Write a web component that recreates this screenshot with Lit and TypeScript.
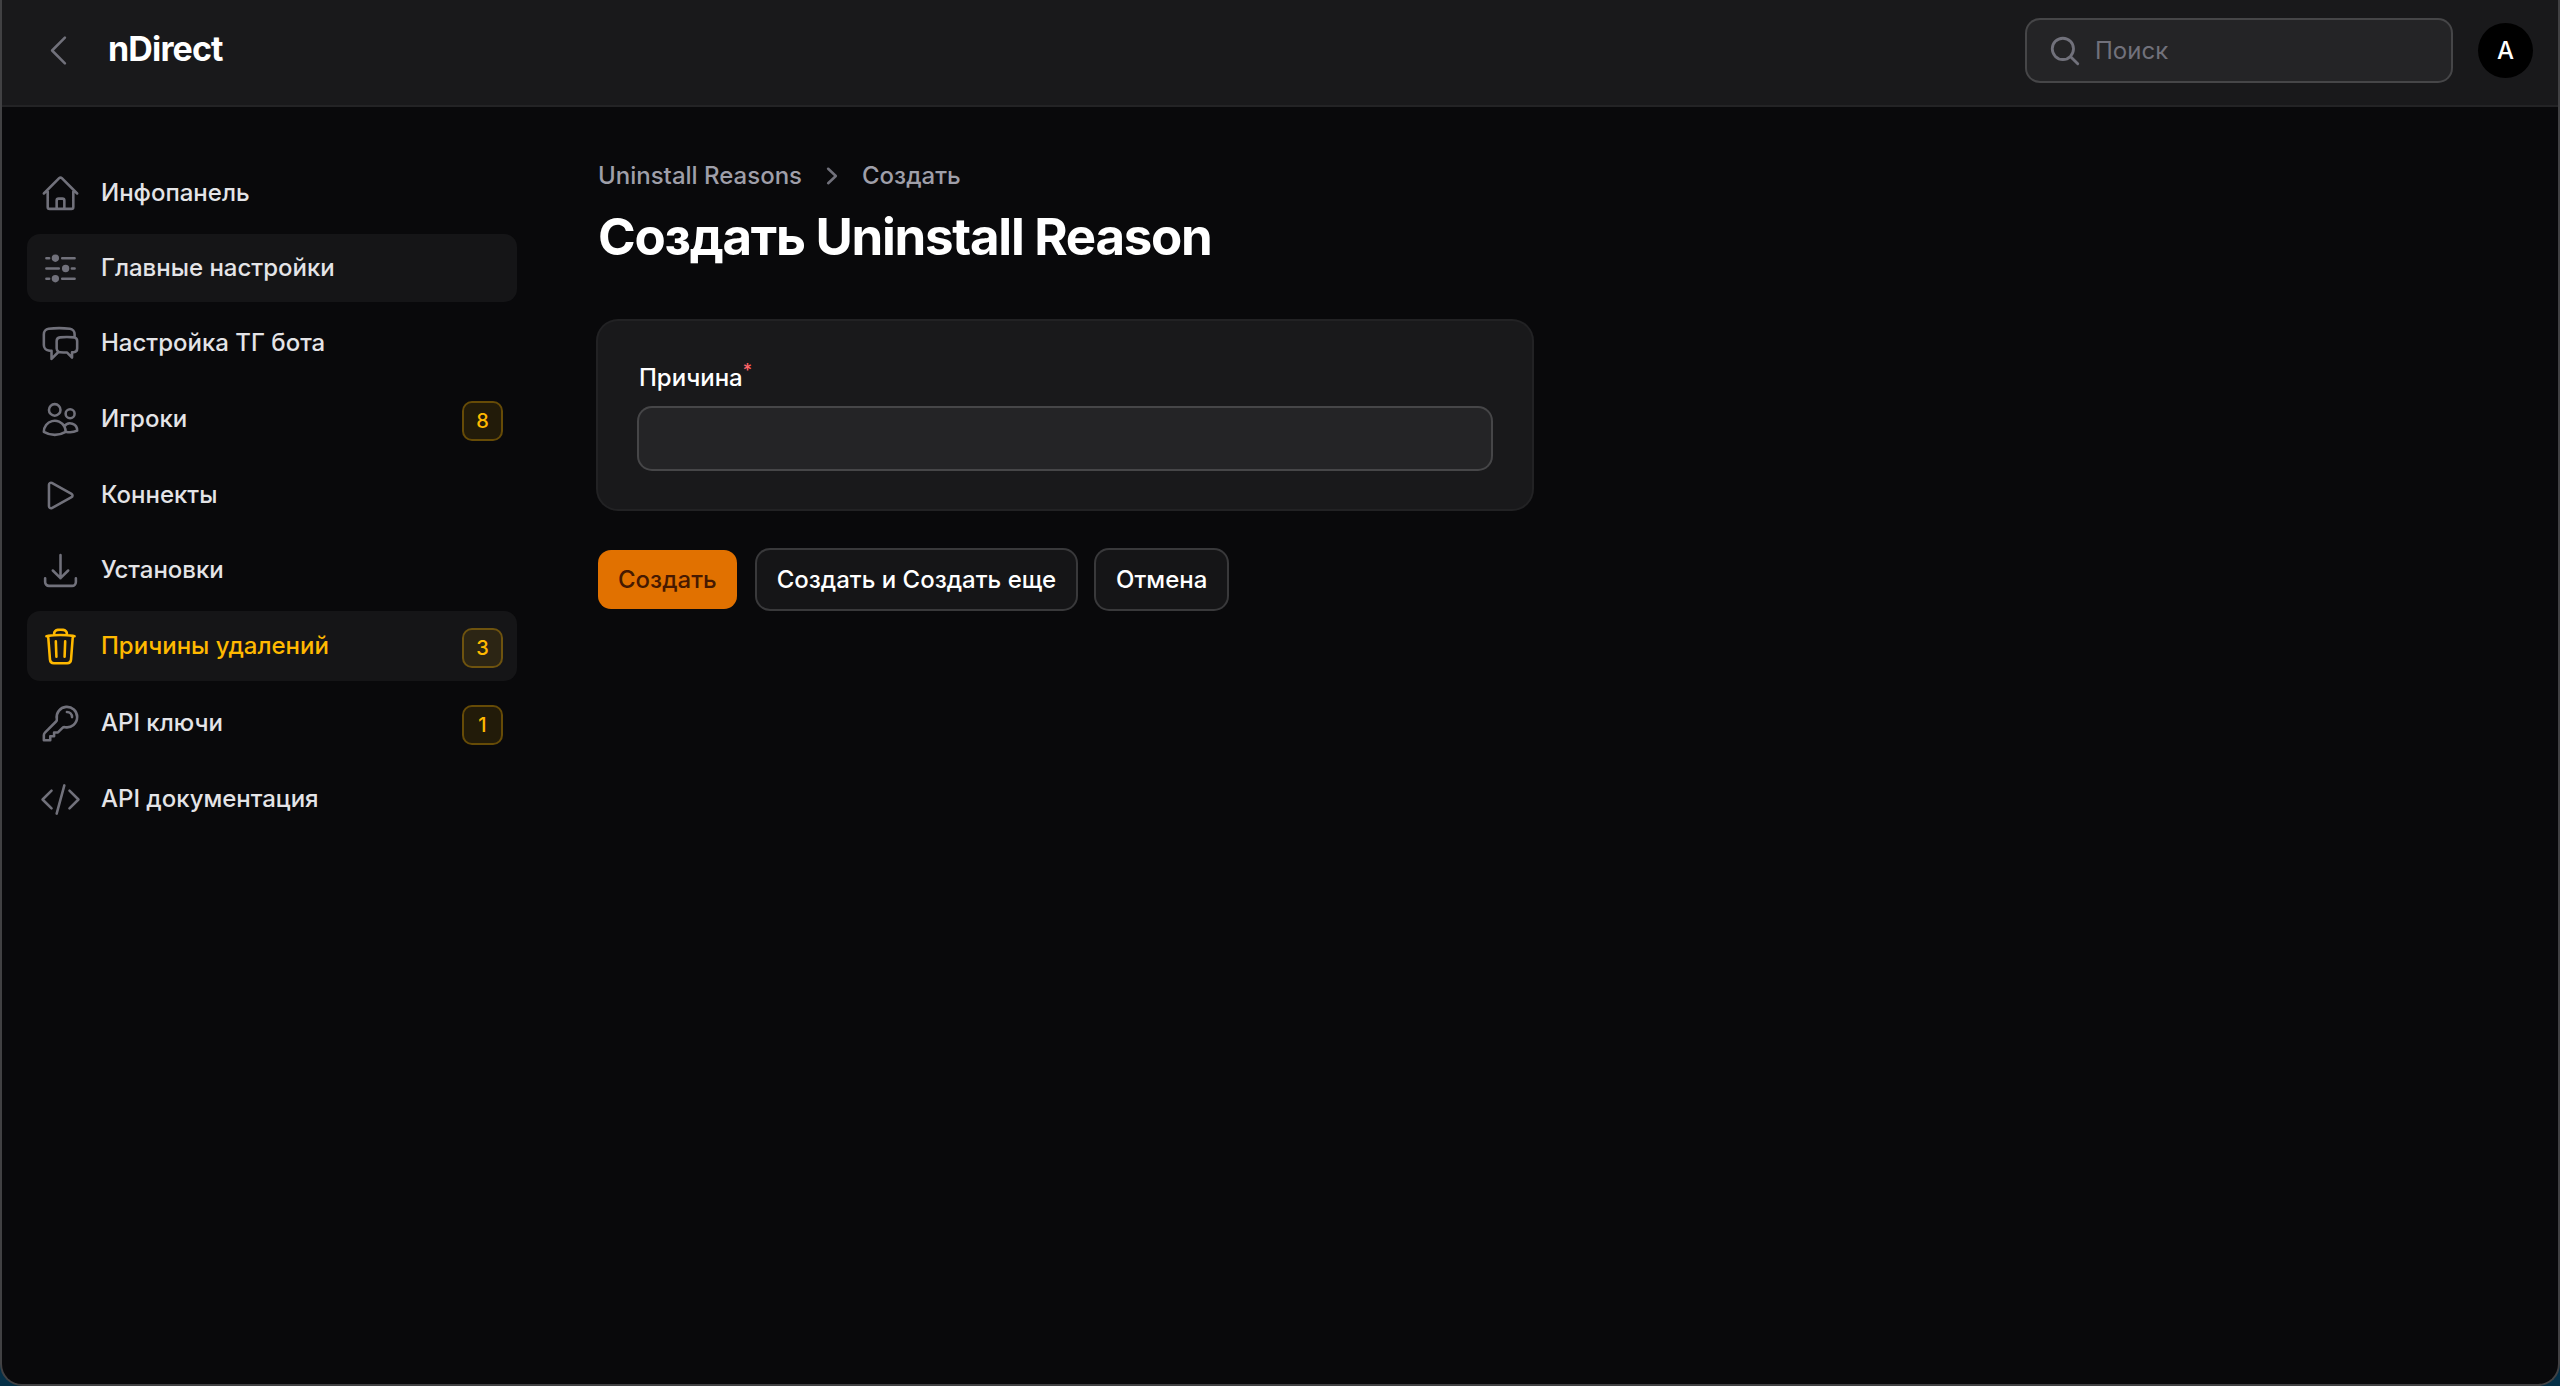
import { LitElement, html, css, svg } from "lit";
import { customElement } from "lit/decorators.js";
import { classMap } from "lit/directives/class-map.js";

interface NavItem {
  label: string;
  icon: string;
  badge?: string;
  state?: "hovered" | "active";
}

const ICONS: Record<string, string> = {
  home: "m2.25 12 8.954-8.955c.44-.439 1.152-.439 1.591 0L21.75 12M4.5 9.75v10.125c0 .621.504 1.125 1.125 1.125H9.75v-4.875c0-.621.504-1.125 1.125-1.125h2.25c.621 0 1.125.504 1.125 1.125V21h4.125c.621 0 1.125-.504 1.125-1.125V9.75M8.25 21h8.25",
  sliders:
    "M3.75 6h1.6M13 6h7.25M3.75 12H11M18.65 12h1.6M3.75 18h1.6M13 18h7.25M7.6 6a1.4 1.4 0 1 0 2.8 0a1.4 1.4 0 1 0-2.8 0M9 6h.01M13.6 12a1.4 1.4 0 1 0 2.8 0a1.4 1.4 0 1 0-2.8 0M15 12h.01M7.6 18a1.4 1.4 0 1 0 2.8 0a1.4 1.4 0 1 0-2.8 0M9 18h.01",
  chat: "M20.25 8.511c.884.284 1.5 1.128 1.5 2.097v4.286c0 1.136-.847 2.1-1.98 2.193-.34.027-.68.052-1.02.072v3.091l-3-3c-1.354 0-2.694-.055-4.02-.163a2.115 2.115 0 0 1-.825-.242m9.345-8.334a2.126 2.126 0 0 0-.476-.095 48.64 48.64 0 0 0-8.048 0c-1.131.094-1.976 1.057-1.976 2.192v4.286c0 .837.46 1.58 1.155 1.951m9.345-8.334V6.637c0-1.621-1.152-3.026-2.76-3.235A48.455 48.455 0 0 0 11.25 3c-2.115 0-4.198.137-6.24.402-1.608.209-2.76 1.614-2.76 3.235v6.226c0 1.621 1.152 3.026 2.76 3.235.577.075 1.157.14 1.74.194V21l4.155-4.155",
  users:
    "M15 19.128a9.38 9.38 0 0 0 2.625.372 9.337 9.337 0 0 0 4.121-.952 4.125 4.125 0 0 0-7.533-2.493M15 19.128v-.003c0-1.113-.285-2.16-.786-3.07M15 19.128v.106A12.318 12.318 0 0 1 8.624 21c-2.331 0-4.512-.645-6.374-1.766l-.001-.109a6.375 6.375 0 0 1 11.964-3.07M12 6.375a3.375 3.375 0 1 1-6.75 0 3.375 3.375 0 0 1 6.75 0Zm8.25 2.25a2.625 2.625 0 1 1-5.25 0 2.625 2.625 0 0 1 5.25 0Z",
  play: "M5.25 5.653c0-.856.917-1.398 1.667-.986l11.54 6.347a1.125 1.125 0 0 1 0 1.972l-11.54 6.347a1.125 1.125 0 0 1-1.667-.986V5.653Z",
  download:
    "M3 16.5v2.25A2.25 2.25 0 0 0 5.25 21h13.5A2.25 2.25 0 0 0 21 18.75V16.5M16.5 12 12 16.5m0 0L7.5 12m4.5 4.5V3",
  trash:
    "m14.74 9-.346 9m-4.788 0L9.26 9m9.968-3.21c.342.052.682.107 1.022.166m-1.022-.165L18.16 19.673a2.25 2.25 0 0 1-2.244 2.077H8.084a2.25 2.25 0 0 1-2.244-2.077L4.772 5.79m14.456 0a48.108 48.108 0 0 0-3.478-.397m-12 .562c.34-.059.68-.114 1.022-.165m0 0a48.11 48.11 0 0 1 3.478-.397m7.5 0v-.916c0-1.18-.91-2.164-2.09-2.201a51.964 51.964 0 0 0-3.32 0c-1.18.037-2.09 1.022-2.09 2.201v.916m7.5 0a48.667 48.667 0 0 0-7.5 0",
  key: "M15.75 5.25a3 3 0 0 1 3 3m3 0a6 6 0 0 1-7.029 5.912c-.563-.097-1.159.026-1.563.43L10.5 17.25H8.25v2.25H6v2.25H2.25v-2.818c0-.597.237-1.17.659-1.591l6.499-6.499c.404-.404.527-1 .43-1.563A6 6 0 1 1 21.75 8.25Z",
  code: "M17.25 6.75 22.5 12l-5.25 5.25m-10.5 0L1.5 12l5.25-5.25m7.5-3-4.5 16.5",
  back: "M15.75 19.5 8.25 12l7.5-7.5",
  search: "m21 21-5.197-5.197m0 0A7.5 7.5 0 1 0 5.196 5.196a7.5 7.5 0 0 0 10.607 10.607Z",
};

const NAV: NavItem[] = [
  { label: "Инфопанель", icon: "home" },
  { label: "Главные настройки", icon: "sliders", state: "hovered" },
  { label: "Настройка ТГ бота", icon: "chat" },
  { label: "Игроки", icon: "users", badge: "8" },
  { label: "Коннекты", icon: "play" },
  { label: "Установки", icon: "download" },
  { label: "Причины удалений", icon: "trash", badge: "3", state: "active" },
  { label: "API ключи", icon: "key", badge: "1" },
  { label: "API документация", icon: "code" },
];

const icon = (name: string) => html`
  <svg class="icon" viewBox="0 0 24 24" fill="none" stroke="currentColor" stroke-width="1.5"
    stroke-linecap="round" stroke-linejoin="round" aria-hidden="true">
    ${svg`<path d=${ICONS[name]}></path>`}
  </svg>`;

@customElement("app-root")
export class AppRoot extends LitElement {
  static styles = css`
    :host {
      display: block;
      background: #053047;
      color: #ffffff;
      font-family: Inter, "Noto Sans", sans-serif;
      font-size: 24px;
      line-height: 34px;
      font-weight: 500;
    }
    * {
      box-sizing: border-box;
    }
    a {
      color: inherit;
      text-decoration: none;
    }
    button,
    input {
      font: inherit;
      border: 0;
      margin: 0;
    }
    .window {
      display: flex;
      flex-direction: column;
      min-height: 100vh;
      border: 2px solid #414143;
      border-top: 0;
      border-radius: 0 0 22px 22px;
      background: #09090b;
      overflow: hidden;
    }
    .icon {
      flex: none;
      display: block;
      width: 41px;
      height: 41px;
    }
    .topbar {
      display: flex;
      align-items: center;
      height: 107px;
      padding: 0 25px 4px 36px;
      background: #19191b;
      border-bottom: 2px solid #232325;
    }
    .back {
      padding: 0;
      background: none;
      color: #71717b;
    }
    .brand {
      margin: 0 auto 3px 29px;
      font-size: 34px;
      font-weight: 700;
      letter-spacing: -0.025em;
    }
    .search {
      display: flex;
      align-items: center;
      gap: 13px;
      width: 424px;
      height: 61px;
      margin-right: 27px;
      padding: 0 21px;
      border-radius: 13px;
      background: #242426;
      box-shadow: 0 0 0 2px #464648;
      color: #71717b;
    }
    .search .icon {
      width: 34px;
      height: 34px;
      stroke-width: 2;
    }
    .search-input {
      flex: 1;
      min-width: 0;
      padding: 0;
      background: none;
      color: #ffffff;
      font-weight: 400;
      outline: none;
    }
    .search-input::placeholder {
      color: #71717b;
      opacity: 1;
    }
    .avatar {
      width: 55px;
      height: 55px;
      padding: 0;
      border-radius: 50%;
      background: #000000;
      color: #ffffff;
    }
    .body {
      display: flex;
      flex: 1;
    }
    .sidebar {
      flex: none;
      width: 542px;
      padding: 52px 27px 52px 25px;
    }
    .nav {
      display: flex;
      flex-direction: column;
      gap: 7px;
      margin: 0;
      padding: 0;
      list-style: none;
    }
    .nav-link {
      display: flex;
      align-items: center;
      gap: 20px;
      min-height: 68px;
      padding: 13px 14px 13px 13px;
      border-radius: 13px;
      color: #e4e4e7;
    }
    .nav-link .icon {
      color: #71717b;
    }
    .nav-label {
      flex: 1;
    }
    .hovered,
    .active {
      background: #151517;
    }
    .active,
    .active .icon {
      color: #ffb900;
    }
    .badge {
      min-width: 41px;
      height: 40px;
      margin-top: 4px;
      padding: 0 10px;
      border: 2px solid rgba(255, 185, 0, 0.38);
      border-radius: 10px;
      background: rgba(255, 185, 0, 0.1);
      background-clip: padding-box;
      color: #ffb900;
      font-size: 20px;
      line-height: 36px;
      text-align: center;
    }
    .nav-link .icon,
    .back .icon {
      stroke-width: 1.5;
    }
    .main {
      flex: 1;
      min-width: 0;
      padding: 52px 54px;
    }
    .crumbs {
      display: flex;
      align-items: center;
      gap: 13px;
      margin: 0 0 14px;
      padding: 0;
      list-style: none;
      color: #9f9fa9;
    }
    .crumb {
      display: flex;
      align-items: center;
      gap: 13px;
    }
    .crumb-arrow {
      width: 34px;
      height: 34px;
      color: #71717b;
    }
    .title {
      margin: 0 0 54px;
      font-size: 51px;
      line-height: 60px;
      font-weight: 700;
      letter-spacing: -0.025em;
    }
    .form {
      display: grid;
      grid-template-columns: repeat(2, minmax(0, 1fr));
      gap: 41px 38px;
    }
    .card {
      display: flex;
      flex-direction: column;
      gap: 13px;
      padding: 40px 41px;
      border-radius: 20px;
      background: #19191b;
      box-shadow: 0 0 0 2px #222224;
    }
    .required {
      color: #ff6467;
      font-size: 18px;
      line-height: 0;
      vertical-align: super;
    }
    .field {
      width: 100%;
      height: 61px;
      padding: 0 20px;
      border-radius: 13px;
      background: #242426;
      box-shadow: 0 0 0 2px #464648;
      color: #ffffff;
      outline: none;
    }
    .actions {
      grid-column: 1 / -1;
      display: flex;
      gap: 20px;
    }
    .button {
      height: 59px;
      padding: 0 20px;
      border-radius: 13px;
      background: #151517;
      box-shadow: 0 0 0 2px #39393b;
      color: #ffffff;
      white-space: nowrap;
    }
    .primary {
      background: #e17100;
      box-shadow: none;
      color: #461901;
    }
  `;

  private renderItem(item: NavItem) {
    const classes = {
      "nav-link": true,
      hovered: item.state === "hovered",
      active: item.state === "active",
    };
    return html`<li>
      <a class=${classMap(classes)} href="#">
        ${icon(item.icon)}
        <span class="nav-label">${item.label}</span>
        ${item.badge ? html`<span class="badge">${item.badge}</span>` : null}
      </a>
    </li>`;
  }

  render() {
    return html`<div class="window">
      <header class="topbar">
        <button class="back" type="button" aria-label="Свернуть меню">${icon("back")}</button>
        <a class="brand" href="#">nDirect</a>
        <label class="search">
          ${icon("search")}
          <input class="search-input" type="search" placeholder="Поиск" aria-label="Поиск" />
        </label>
        <button class="avatar" type="button">A</button>
      </header>
      <div class="body">
        <nav class="sidebar">
          <ul class="nav">${NAV.map((item) => this.renderItem(item))}</ul>
        </nav>
        <main class="main">
          <ol class="crumbs">
            <li><a href="#">Uninstall Reasons</a></li>
            <li class="crumb">
              <svg class="crumb-arrow" viewBox="0 0 20 20" fill="currentColor" aria-hidden="true">
                <path d="M7.21 14.77a.75.75 0 0 1 .02-1.06L11.168 10 7.23 6.29a.75.75 0 1 1 1.04-1.08l4.5 4.25a.75.75 0 0 1 0 1.08l-4.5 4.25a.75.75 0 0 1-1.06-.02Z"></path>
              </svg>
              <a href="#">Создать</a>
            </li>
          </ol>
          <h1 class="title">Создать Uninstall Reason</h1>
          <form class="form" @submit=${(e: Event) => e.preventDefault()}>
            <section class="card">
              <label for="reason">Причина<span class="required">*</span></label>
              <input class="field" id="reason" type="text" />
            </section>
            <div class="actions">
              <button class="button primary" type="submit">Создать</button>
              <button class="button" type="button">Создать и Создать еще</button>
              <button class="button" type="button">Отмена</button>
            </div>
          </form>
        </main>
      </div>
    </div>`;
  }
}
